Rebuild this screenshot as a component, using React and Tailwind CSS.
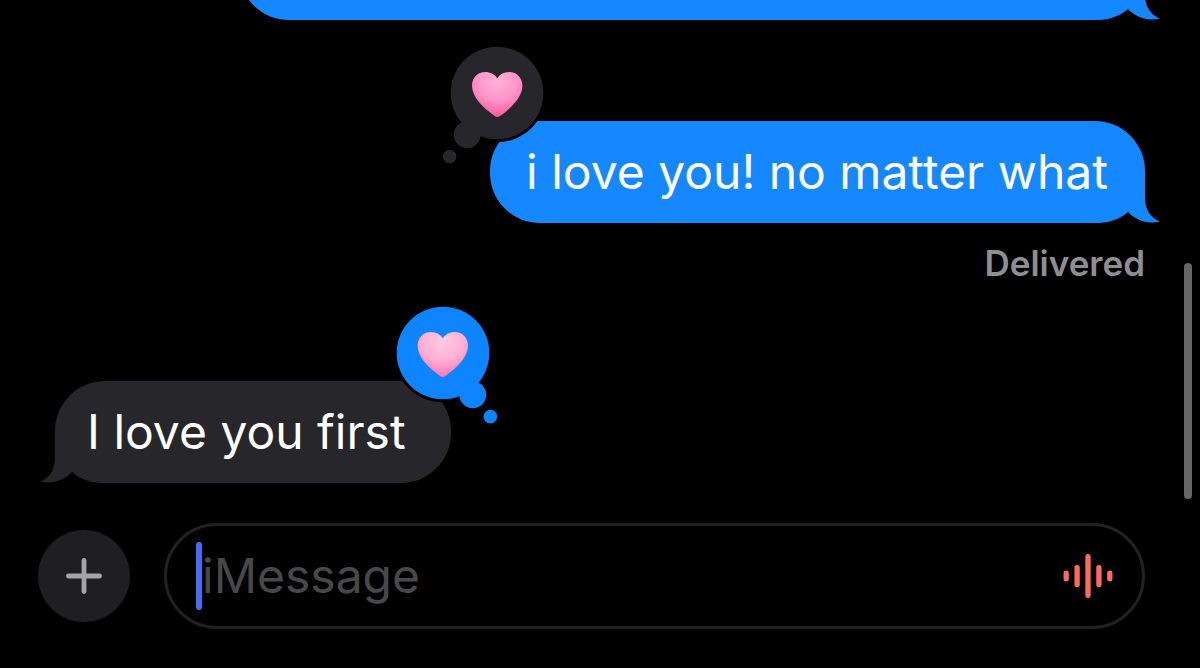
import React from "react";

function Tail({ side }) {
  const place =
    side === "right"
      ? "absolute bottom-0 -right-4 text-[#1588ff]"
      : "absolute bottom-0 -left-4 -scale-x-100 text-[#27272b]";
  return (
    <svg className={place} width="64" height="52" viewBox="0 0 64 52" fill="currentColor" aria-hidden="true">
      <path d="M0 0H48V27C48 38 53 46.5 63 50.8C53 52.8 41 51 31 41C22 48.5 12 52 0 52Z" />
    </svg>
  );
}

function Reaction({ id, className, bubble, top, middle, bottom }) {
  return (
    <svg className={className} width="108" height="124" viewBox="0 0 108 124" role="img" aria-label="Heart reaction">
      <defs>
        <radialGradient id={id} cx="0.5" cy="0.22" r="0.82">
          <stop offset="0" stopColor={top} />
          <stop offset="0.5" stopColor={middle} />
          <stop offset="1" stopColor={bottom} />
        </radialGradient>
      </defs>
      <circle cx="57" cy="49" r="49.2" fill="#000" />
      <circle cx="57" cy="49" r="46.3" fill={bubble} />
      <circle cx="27.2" cy="90.8" r="13.4" fill={bubble} />
      <circle cx="9.6" cy="112.6" r="6.8" fill={bubble} />
      <path
        fill={`url(#${id})`}
        d="M57.2 34.2C54.5 30 50.3 27.9 45.2 27.9C37.5 27.9 32 33.8 32 41.6C32 53 42.5 63.5 54.6 72C56.4 73.2 58.2 73.2 60 72C72 63.5 82.4 53 82.4 41.6C82.4 33.8 76.9 27.9 69.2 27.9C64 27.9 59.9 30 57.2 34.2Z"
      />
    </svg>
  );
}

function Bubble({ side, children }) {
  const look =
    side === "right"
      ? "relative self-end rounded-[50px] bg-[#1588ff] py-5 pr-[37px] pl-9"
      : "relative self-start rounded-[50px] bg-[#27272b] py-5 pr-[45px] pl-8";
  return (
    <div className={look}>
      <Tail side={side} />
      {children}
    </div>
  );
}

export default function App() {
  return (
    <main className="relative flex h-screen flex-col overflow-hidden bg-black font-['Inter',sans-serif] text-5xl leading-[62px] text-white">
      <section className="flex min-h-0 flex-1 flex-col justify-end overflow-hidden pr-[55px] pb-10 pl-[55px]" aria-label="Messages">
        <div className="relative h-[102px] w-full max-w-[906px] shrink-0 self-end rounded-[50px] bg-[#1588ff]">
          <Tail side="right" />
        </div>
        <div className="mt-[101px] flex flex-col">
          <Bubble side="right">
            <p className="relative">i love you! no matter what</p>
            <Reaction
              id="heart-received"
              className="absolute -top-[77px] -left-[50px]"
              bubble="#27272b"
              top="#ffb3d9"
              middle="#ff94c8"
              bottom="#f9529b"
            />
          </Bubble>
          <p className="mt-[18px] self-end text-[35px] leading-[44px] font-semibold text-[#8e8e93]">Delivered</p>
        </div>
        <div className="mt-24 flex flex-col">
          <Bubble side="left">
            <p className="relative">I love you first</p>
            <Reaction
              id="heart-sent"
              className="absolute -top-[77px] -right-[49px] -scale-x-100"
              bubble="#0f84ff"
              top="#ffcbe2"
              middle="#ffb0d4"
              bottom="#fd6fb2"
            />
          </Bubble>
        </div>
      </section>

      <form className="flex items-center gap-[34px] pr-[55px] pb-[39px] pl-[38px]" onSubmit={(e) => e.preventDefault()}>
        <button type="button" aria-label="Add attachment" className="flex size-[92px] shrink-0 items-center justify-center rounded-full bg-[#1f1f21]">
          <svg width="36" height="36" viewBox="0 0 36 36" fill="none" stroke="#a4a4a6" strokeWidth="4.8" strokeLinecap="round" aria-hidden="true">
            <path d="M18 2.4V33.6M2.4 18H33.6" />
          </svg>
        </button>
        <div className="relative flex h-[106px] min-w-0 flex-1 items-center rounded-full border-3 border-[#222224] pr-[29px] pl-[35px]">
          <span className="absolute left-[29px] h-[68px] w-[6px] rounded-full bg-[#466bf6]" aria-hidden="true" />
          <input
            type="text"
            aria-label="iMessage"
            placeholder="iMessage"
            className="min-w-0 flex-1 bg-transparent caret-[#466bf6] outline-none placeholder:text-[#48484a]"
          />
          <button type="button" aria-label="Record audio message">
            <svg width="50" height="46" viewBox="0 0 50 46" fill="none" stroke="#ff6b5b" strokeWidth="5.3" strokeLinecap="round" aria-hidden="true">
              <path d="M3.2 20.2V25.8M14.1 14.6V31.4M25 3.7V42.3M35.9 14.6V31.4M46.8 20.2V25.8" />
            </svg>
          </button>
        </div>
      </form>

      <div className="absolute top-[263px] right-2 h-[236px] w-2 rounded-full bg-[#666667]" aria-hidden="true" />
    </main>
  );
}
